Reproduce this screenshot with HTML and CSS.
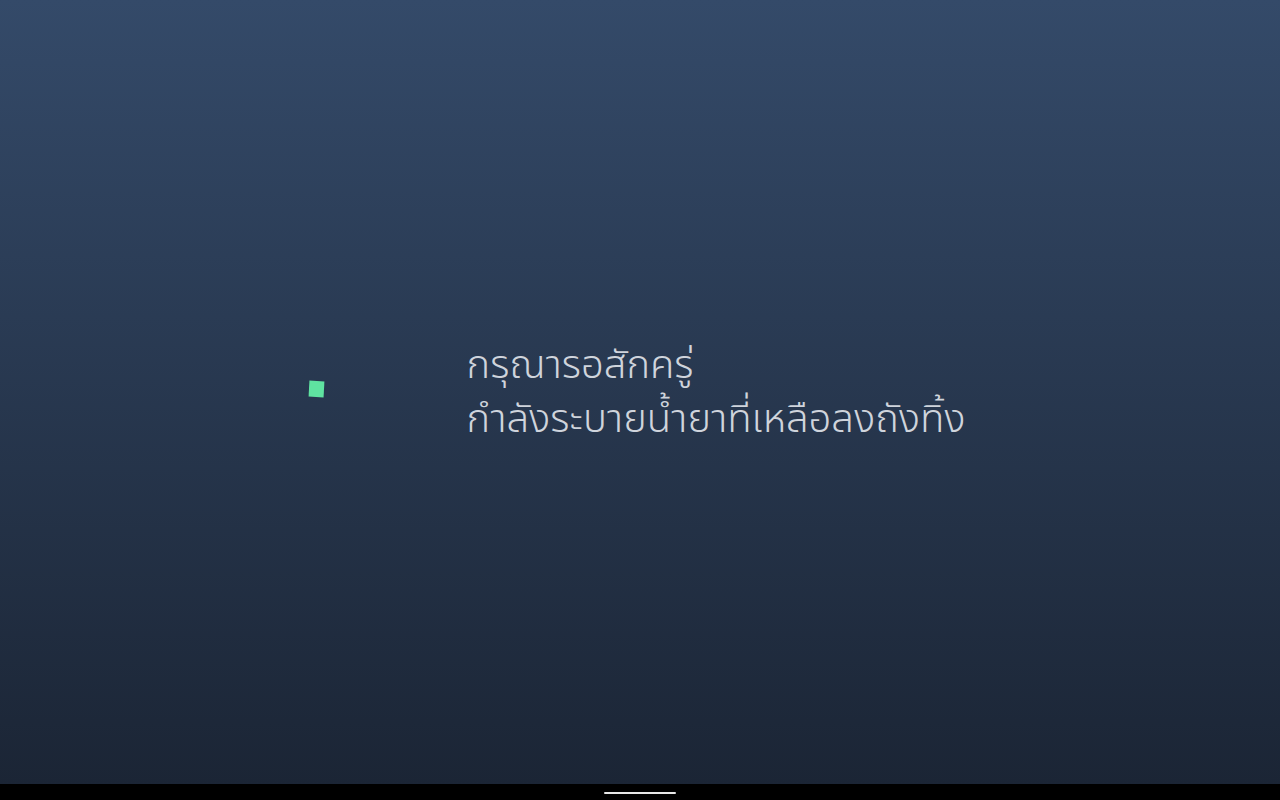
FILE: index.html
```html
<!DOCTYPE html>
<html lang="th">
<head>
<meta charset="utf-8">
<link rel="stylesheet" href="styles.css">
</head>
<body>
<div class="screen">
  <main class="content">
    <div class="spinner"><div class="square"></div></div>
    <div class="message">
      <p>กรุณารอสักครู่</p>
      <p>กำลังระบายน้ำยาที่เหลือลงถังทิ้ง</p>
    </div>
  </main>
  <div class="navbar"><div class="home"></div></div>
</div>
</body>
</html>
```
FILE: styles.css
```css
html, body {
  margin: 0;
  padding: 0;
  width: 1280px;
  height: 800px;
  overflow: hidden;
}
.screen {
  display: flex;
  flex-direction: column;
  height: 800px;
  font-family: "Noto Sans Thai", "Noto Sans", sans-serif;
}
.content {
  flex: 1;
  display: flex;
  align-items: center;
  justify-content: center;
  gap: 142px;
  padding-right: 6px;
  background: linear-gradient(to bottom, #344a69, #1b2535);
}
.spinner {
  width: 16px;
  height: 16px;
  margin-bottom: 6px;
  display: flex;
  align-items: center;
  justify-content: center;
}
.square {
  width: 15px;
  height: 16px;
  background: #5fe3a1;
  transform: rotate(3deg);
}
.message {
  color: #cfd4dc;
  font-size: 40px;
  font-weight: 330;
  line-height: 54px;
  padding-top: 1px;
}
.message p {
  margin: 0;
}
.navbar {
  height: 16px;
  background: #000;
  display: flex;
  justify-content: center;
  align-items: center;
}
.home {
  width: 72px;
  height: 2px;
  border-radius: 1px;
  background: #e8e8e8;
  margin-top: 2px;
}
```
